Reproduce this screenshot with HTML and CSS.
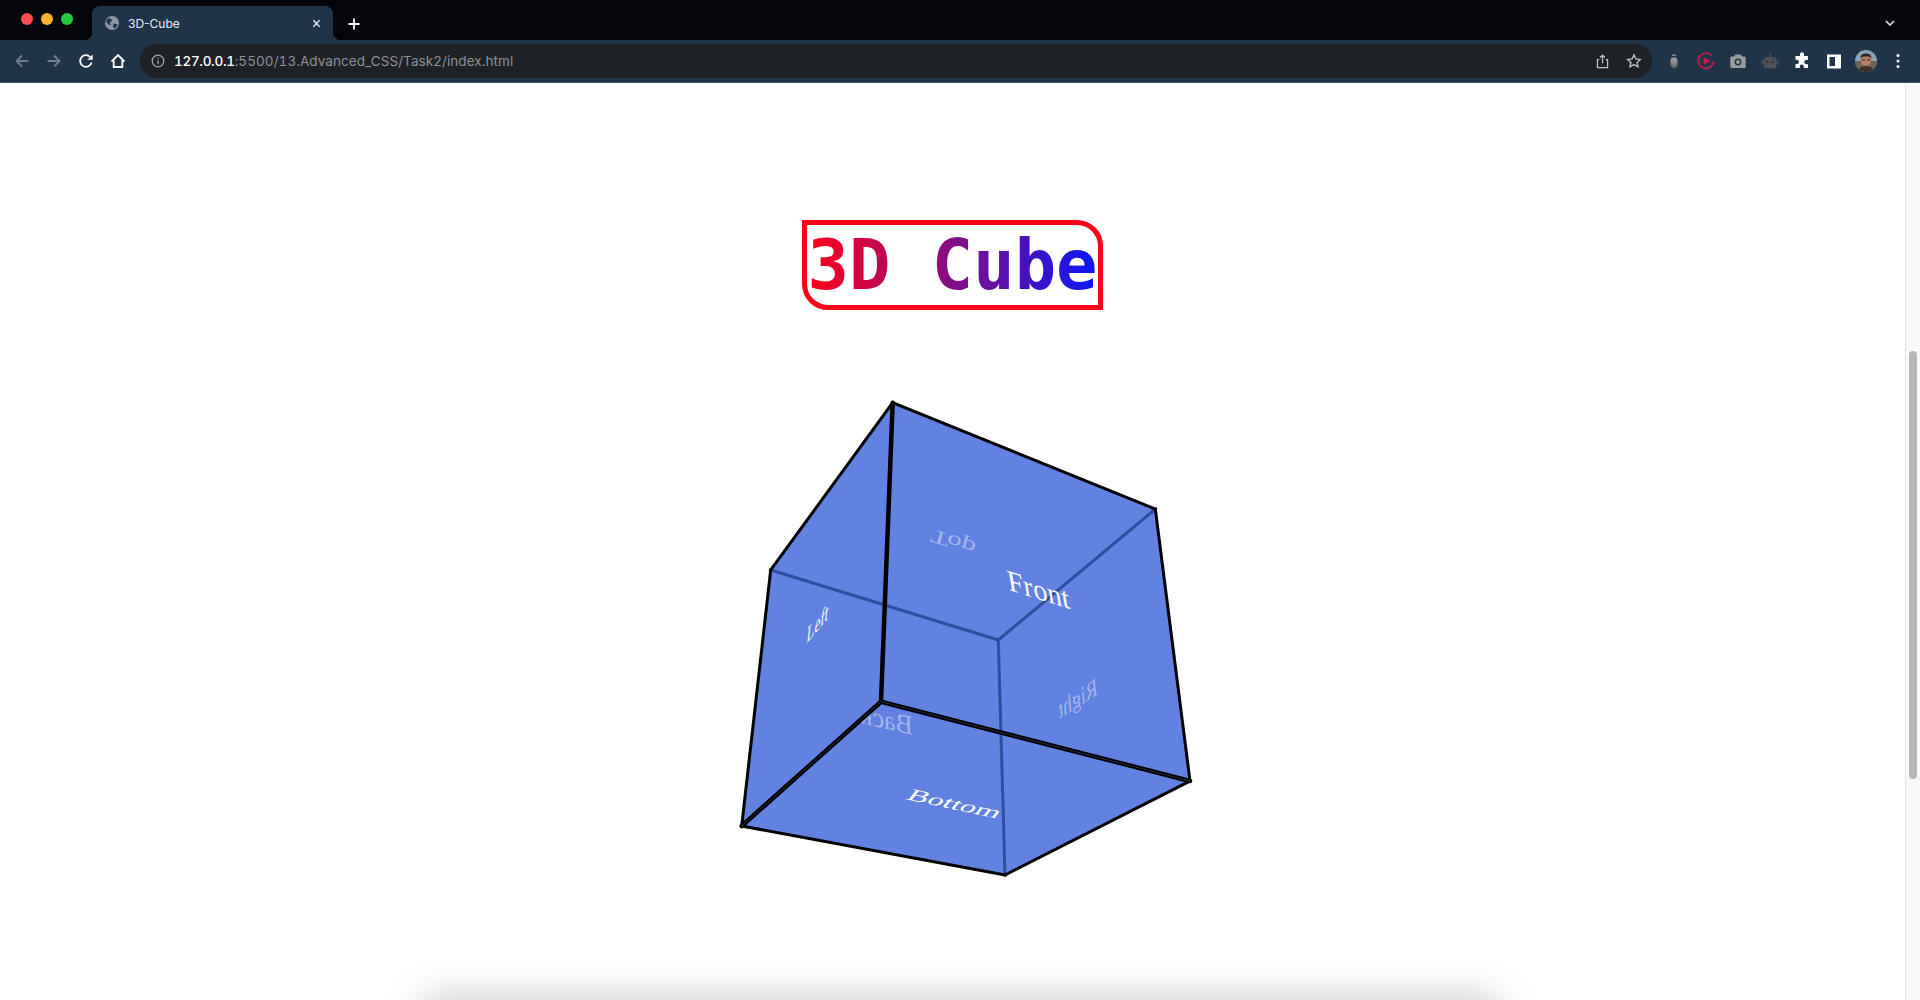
FILE: index.html
```html
<!DOCTYPE html>
<html lang="en">
<head>
<meta charset="utf-8">
<title>3D-Cube</title>
<link rel="stylesheet" href="styles.css">
</head>
<body>
<header class="browser">
  <div class="tabstrip">
    <div class="lights"><i class="light red"></i><i class="light amber"></i><i class="light green"></i></div>
    <div class="tab">
      <svg class="favicon" viewBox="0 0 14 14"><circle cx="7" cy="7" r="7" fill="#8d97a3"/><path d="M3 2l3 .8 1 2-2 1.700L5.500 9.500 3.500 8.500 1 5.500zM8.500 7.500l3 .5 1.200 1-2.700 3.300-1.500-.5-.5-2z" fill="#1f3349"/></svg>
      <span class="tab-title">3D-Cube</span>
      <svg class="tab-close" viewBox="0 0 10 10"><path d="M1.500 1.500l7 7M8.500 1.500l-7 7"/></svg>
    </div>
    <svg class="newtab" viewBox="0 0 12 12"><path d="M6 .5v11M.5 6h11"/></svg>
    <svg class="tabmenu" viewBox="0 0 10 6"><path d="M1 1l4 4 4-4"/></svg>
  </div>
  <div class="toolbar">
    <span class="slot"><svg class="nav dim" viewBox="0 0 16 16"><path d="M14.500 8H2.500M8 2.500L2.500 8 8 13.500"/></svg></span>
    <span class="slot"><svg class="nav dim" viewBox="0 0 16 16"><path d="M1.500 8h12M8 2.500L13.500 8 8 13.500"/></svg></span>
    <span class="slot"><svg class="nav" viewBox="0 0 16 16"><path d="M13.600 9.500A5.800 5.800 0 1 1 12.200 4"/><path class="solid" d="M9.300 6.800h5.400V1.400z"/></svg></span>
    <span class="slot"><svg class="nav" viewBox="0 0 16 16"><path d="M1.500 8.500L8 2l6.500 6.500M3.700 7v7h8.600V7"/></svg></span>
    <div class="omnibox">
      <svg class="info" viewBox="0 0 14 14"><circle cx="7" cy="7" r="5.800"/><path d="M7 6.200v4M7 3.800v1.300"/></svg>
      <span class="url"><b class="host">127.0.0.1</b>:5500/13.Advanced_CSS/Task2/index.html</span>
      <span class="slot"><svg class="omni-icon share" viewBox="0 0 14 16"><path d="M3.500 6H1.500v8.500h11V6h-2M7 10V1.200M4.300 3.700L7 1l2.700 2.700"/></svg></span>
      <span class="slot"><svg class="omni-icon star" viewBox="0 0 16 16"><path d="M8 1.800l1.900 4.100 4.500.5-3.300 3 .9 4.400L8 11.600l-4 2.200.9-4.400-3.300-3 4.500-.5z"/></svg></span>
    </div>
    <div class="extensions">
      <span class="slot"><svg class="ext" viewBox="0 0 18 18"><defs><linearGradient id="bug-fill" x1="0" y1="0" x2="0" y2="1"><stop offset="0" stop-color="#a8a8a8"/><stop offset="1" stop-color="#5f6468"/></linearGradient></defs><path fill="url(#bug-fill)" d="M5.800 7C6 6 7.500 5.500 9 5.500s3 .5 3.200 1.500l.3 2.500v2.500c0 2.500-1.500 4-3.500 4s-3.500-1.500-3.500-4V9.500z"/><path class="ext-line" d="M6.800 3.800Q9 2 11.200 3.800"/></svg></span>
      <span class="slot"><svg class="ext" viewBox="0 0 18 18"><path class="ring" d="M14.500 3.500A7.600 7.600 0 1 0 16.600 9"/><path class="play" d="M6.800 5.200L13 9l-6.200 3.800z"/></svg></span>
      <span class="slot"><svg class="ext" viewBox="0 0 18 18"><path class="ext-grey" d="M2.500 4.500H5L6.200 2.500h5.600L13 4.500h2.500a1.200 1.200 0 0 1 1.200 1.200v9a1.200 1.200 0 0 1-1.200 1.200h-13a1.200 1.200 0 0 1-1.200-1.200v-9a1.200 1.200 0 0 1 1.200-1.200z"/><circle class="lens" cx="9" cy="10" r="2.700"/></svg></span>
      <span class="slot"><svg class="ext" viewBox="0 0 18 18"><rect class="ext-dark" x="2.500" y="5" width="13" height="11.500" rx="3.500"/><rect class="ext-dark" x=".5" y="8.500" width="1.500" height="4"/><rect class="ext-dark" x="16" y="8.500" width="1.500" height="4"/><rect class="ext-dark" x="8.300" y="1" width="1.400" height="4"/><circle class="ext-eye" cx="6.300" cy="9.800" r="1.100"/><circle class="ext-eye" cx="11.700" cy="9.800" r="1.100"/></svg></span>
      <span class="slot"><svg class="ext" viewBox="0 0 18 18"><path class="ext-white" d="M7 2.300a2 2 0 0 1 4 0V4h4v4h-1.700a2.100 2.100 0 0 0 0 4.200H15V16h-4.200v-1.500a2 2 0 0 0-4 0V16H2.500v-4h1.300a2.100 2.100 0 0 0 0-4.200H2.500V4H7z"/></svg></span>
      <span class="slot"><svg class="ext" viewBox="0 0 18 18"><path class="ext-white" fill-rule="evenodd" d="M2 2.500h14v14H2zM4.500 5v9H10V5z"/></svg></span>
      <span class="slot"><svg class="avatar" viewBox="0 0 22 22"><defs><clipPath id="avatar-clip"><circle cx="11" cy="11" r="11"/></clipPath></defs><g clip-path="url(#avatar-clip)"><rect width="22" height="22" fill="#8aa3b5"/><rect y="11" width="22" height="11" fill="#6c6452"/><path d="M3 22c1-5 4-6 8-6s7 1 8 6z" fill="#3a2f2e"/><ellipse cx="11" cy="11" rx="5" ry="6.500" fill="#b98068"/><path d="M5.500 9C5.500 4.500 8 3.500 11 3.500s5.500 1 5.500 5.500c-1-2-2-2.500-5.500-2.500S6.500 7 5.500 9z" fill="#2a2322"/><path d="M6.500 10h3.500M12 10h3.500" stroke="#2a2322" stroke-width="1.200"/><path d="M7.500 14.500Q11 18 14.500 14.500 13 17.800 11 17.800T7.500 14.500z" fill="#3a2f2e"/></g></svg></span>
      <span class="slot"><svg class="kebab" viewBox="0 0 4 16"><circle cx="2" cy="2.500" r="1.500"/><circle cx="2" cy="8" r="1.500"/><circle cx="2" cy="13.500" r="1.500"/></svg></span>
    </div>
  </div>
</header>
<div class="viewport">
  <main class="page">
    <h1 class="title"><span class="title-text">3D Cube</span></h1>
    <svg class="cube" viewBox="702 390 501 500">
      <defs>
        <clipPath id="back-clip"><polygon points="881,701.700 741.700,826 1005,875 1190,781 1100,650"/></clipPath>
      </defs>
      <polygon class="face" points="892.700,402.700 1155.300,509 1190,781 1005,875 741.700,826 770.700,570"/>
      <text class="label faded" transform="matrix(1.300 .4 .23 -.85 933 529)">Top</text>
      <g clip-path="url(#back-clip)"><text class="label faded" transform="matrix(-1.170 -.27 .05 1.250 913 735)">Back</text></g>
      <text class="label faded" transform="matrix(-.8 .51 .1 1.100 1098 694)">Right</text>
      <line class="edge-inner" x1="770.700" y1="570" x2="998.300" y2="640"/>
      <line class="edge-inner" x1="1155.300" y1="509" x2="998.300" y2="640"/>
      <line class="edge-inner" x1="998.300" y1="640" x2="1005" y2="875"/>
      <line class="edge" x1="892.700" y1="402.700" x2="1155.300" y2="509"/>
      <line class="edge" x1="892.700" y1="402.700" x2="770.700" y2="570"/>
      <line class="edge" x1="770.700" y1="570" x2="741.700" y2="826"/>
      <line class="edge" x1="1155.300" y1="509" x2="1190" y2="781"/>
      <line class="edge" x1="741.700" y1="826" x2="1005" y2="875"/>
      <line class="edge" x1="1005" y1="875" x2="1190" y2="781"/>
      <line class="edge heavy" x1="892.700" y1="402.700" x2="881" y2="701.700"/>
      <line class="edge heavy" x1="881" y1="701.700" x2="741.700" y2="826"/>
      <line class="edge heavy" x1="881" y1="701.700" x2="1190" y2="781"/>
      <line class="edge-core" x1="881" y1="701.700" x2="741.700" y2="826"/>
      <line class="edge-core" x1="881" y1="701.700" x2="1190" y2="781"/>
      <text class="label" transform="matrix(1.190 .37 .21 1.260 1009 590)">Front</text>
      <text class="label small" transform="matrix(.62 -.72 -.12 1.150 806 644)">Left</text>
      <text class="label small" transform="matrix(1.450 .31 -.58 .72 905 799)">Bottom</text>
    </svg>
    <div class="shelf"></div>
  </main>
  <div class="scrollbar"><div class="thumb"></div></div>
</div>
</body>
</html>
```
FILE: styles.css
```css
* { box-sizing: border-box; }
html, body { margin: 0; height: 100%; overflow: hidden; background: #fff; }
body { display: flex; flex-direction: column; height: 1000px; font-family: "Inter", "Liberation Sans", sans-serif; }

.browser { flex: none; height: 83px; display: flex; flex-direction: column; }
.tabstrip { height: 40px; background: #03050b; display: flex; align-items: flex-end; }
.lights { width: 92px; height: 40px; display: flex; gap: 8px; padding: 13px 0 0 21px; flex: none; }
.light { width: 12px; height: 12px; border-radius: 50%; display: block; }
.red { background: #fd4f4f; }
.amber { background: #fdb02f; }
.green { background: #28c840; }
.tab { width: 241px; height: 34px; background: #1f3349; border-radius: 8px 8px 0 0; display: flex; align-items: center; padding: 0 12px 0 13px; position: relative; flex: none; }
.tab::before, .tab::after { content: ""; position: absolute; bottom: 0; width: 8px; height: 8px; }
.tab::before { left: -8px; background: radial-gradient(circle at 0 0, #03050b 8px, #1f3349 8.500px); }
.tab::after { right: -8px; background: radial-gradient(circle at 100% 0, #03050b 8px, #1f3349 8.500px); }
.favicon { width: 14px; height: 14px; flex: none; }
.tab-title { margin-left: 9px; font-size: 12px; color: #e9edf1; flex: 1; }
.tab-close { width: 9px; height: 9px; fill: none; stroke: #e9edf1; stroke-width: 1.500; flex: none; }
.newtab { width: 12px; height: 12px; margin: 0 0 10px 15px; fill: none; stroke: #fff; stroke-width: 1.800; flex: none; }
.tabmenu { width: 10px; height: 6px; margin: 0 25px 14px auto; fill: none; stroke: #e4e8ec; stroke-width: 1.500; flex: none; }

.toolbar { height: 43px; background: #1f3349; border-bottom: 1px solid #3f5268; display: flex; align-items: center; padding-left: 6px; }
.slot { width: 32px; flex: none; display: flex; align-items: center; justify-content: center; }
.nav { width: 16px; height: 16px; fill: none; stroke: #fff; stroke-width: 1.800; }
.nav.dim { stroke: #6f7f90; }
.nav .solid { fill: #fff; stroke: none; }
.omnibox { width: 1512px; height: 34px; margin-left: 6px; background: #1e2227; border-radius: 17px; display: flex; align-items: center; padding: 0 2px 0 11px; flex: none; }
.info { width: 14px; height: 14px; fill: none; stroke: #a5a8ac; stroke-width: 1.300; flex: none; }
.url { margin-left: 9px; font-size: 13.500px; letter-spacing: .07px; font-variant-numeric: tabular-nums; color: #8d9196; flex: 1; white-space: nowrap; }
.host { color: #fff; font-weight: 500; letter-spacing: -.3px; }
.omni-icon { fill: none; stroke: #c2c5c8; stroke-width: 1.300; }
.share { width: 13px; height: 15px; }
.star { width: 16px; height: 16px; }
.extensions { flex: 1; display: flex; align-items: center; padding-left: 6px; }
.ext { width: 18px; height: 18px; }
.ext-grey { fill: #9b9b9b; }
.ext-line { fill: none; stroke: #9b9b9b; stroke-width: 1.200; }
.ext-dark { fill: #4d5156; }
.ext-eye { fill: #1f3349; }
.ext-white { fill: #fff; }
.ring { fill: none; stroke: #d11a4a; stroke-width: 1.600; }
.play { fill: #d11a4a; }
.lens { fill: #9b9b9b; stroke: #1f3349; stroke-width: 1.500; }
.avatar { width: 22px; height: 22px; }
.kebab { width: 4px; height: 16px; fill: #f1f3f4; }

.viewport { flex: 1; display: flex; min-height: 0; }
.page { flex: 1; display: flex; flex-direction: column; align-items: center; overflow: hidden; background: #fff; }
.title { margin: 137px 0 0; height: 90px; width: 301px; border: 5px solid #ff0019; border-radius: 0 26px 0 26px; display: flex; align-items: center; justify-content: center; flex: none; }
.title-text { font-family: "DejaVu Sans Mono", monospace; font-weight: 700; font-size: 68.800px; line-height: 1; white-space: pre; background: linear-gradient(90deg, #ff0019, #0019ff 104%); -webkit-background-clip: text; background-clip: text; color: transparent; }
.cube { width: 501px; height: 500px; margin-top: 80px; flex: none; }
.face { fill: #6182e0; }
.edge { stroke: #000; stroke-width: 3; stroke-linecap: square; }
.edge.heavy { stroke-width: 4.500; stroke-linecap: round; }
.edge-core { stroke: #3a4668; stroke-width: .6; }
.edge-inner { stroke: #2f4d9e; stroke-width: 3; }
.label { font-family: "Liberation Serif", serif; font-size: 24px; fill: #fff; }
.label.small { font-size: 21px; }
.label.faded { fill: #a3b6ed; font-size: 22px; }
.shelf { width: 1031px; height: 0; margin: auto 0 0 15px; flex: none; box-shadow: 0 22px 44px 22px rgba(0, 0, 0, .24); }
.scrollbar { flex: none; width: 15px; background: #f9f9f9; border-left: 1px solid #e5e5e5; padding: 268px 3px 0 3px; }
.thumb { height: 428px; background: #b6b6b6; border-radius: 4px; }
```
